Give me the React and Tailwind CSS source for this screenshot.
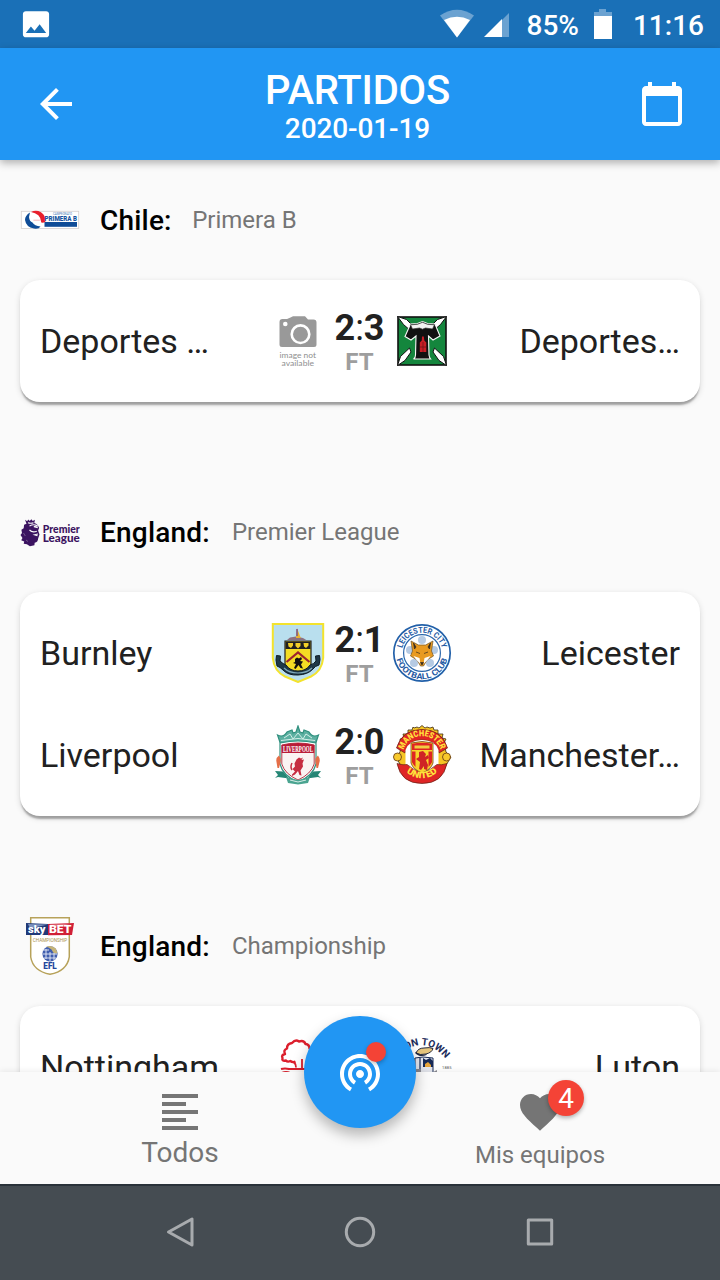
import React from 'react';
import {
  MdArrowBack,
  MdCalendarToday,
  MdFavorite,
  MdFormatAlignLeft,
  MdImage,
  MdWifiTethering,
} from 'react-icons/md';

function PrimeraB() {
  return (
    <svg className="h-[60px] w-[60px]" viewBox="0 0 60 60">
      <rect x="1.3" y="21.3" width="57.4" height="17.2" fill="#fff" stroke="#d4cfcf" strokeWidth=".8" />
      <path d="M10 22.500Q5 25.500 5 30 6 37 14 38.600 19 39.300 20.500 36.500 14.500 36 12.500 32.500 9.500 31.500 9 27z" fill="#0f4c97" />
      <path d="M11 22q5-2.500 10 .2 5.300 3.500 4.300 9.800-2 1-4 .500-.5-5-3-7.300-3-2.500-7.300-3.200z" fill="#e8202c" />
      <path d="M13.400 30.200h6.500" stroke="#f3a3a8" strokeWidth=".8" />
      <text x="33" y="25.200" fontFamily="Roboto, sans-serif" fontSize="3" fill="#4474b2" textLength="19" lengthAdjust="spacingAndGlyphs">CAMPEONATO</text>
      <text x="24.500" y="31" fontFamily="Roboto, sans-serif" fontWeight="900" fontSize="7.300" fill="#1754a0" textLength="32.500" lengthAdjust="spacingAndGlyphs">PRIMERA B</text>
      <rect x="24.500" y="32" width="32.500" height="4.800" fill="#0f4c97" />
    </svg>
  );
}

function PremierLeague() {
  return (
    <svg className="h-[60px] w-[60px]" viewBox="0 0 60 60">
      <path
        d="M5 17.800l2.200 1.400 1-1.700 1.500 1.600 1.700-1.900 1.300 1.900 2.200-1.300-.6 3.200q4 1.400 4.800 5l-1 2.400 1.400 4-1.300 3.800q-.3 4-3.500 4.600l-.3 2.500-4.500 1-3-2-3.200-.5.5-2.400-3-1.200 1.300-2.300L.500 33l1.500-2-.6-3.300 2.300-1.500.4-3.500 2.400-1z"
        fill="#3b1360"
      />
      <path d="M9.500 24q4.500-2.600 8 0l-3.600.6 3.900 1.100M9.500 28q2.800 3 7.300 1.200M18 32l-3.500.8 3 1M8 20.800q3 1 5.500 0" fill="none" stroke="#fafafa" strokeWidth="1.100" />
      <path d="M3.500 31l1.800 3M6 38l2 1.500" fill="none" stroke="#8a72a0" strokeWidth=".7" />
      <g fontFamily="Lato, sans-serif" fontWeight="900" fill="#3b1360">
        <text x="22.800" y="30.500" fontSize="10.500" textLength="37" lengthAdjust="spacingAndGlyphs">Premier</text>
        <text x="22.800" y="40" fontSize="10.500" textLength="37" lengthAdjust="spacingAndGlyphs">League</text>
      </g>
    </svg>
  );
}

function Championship() {
  return (
    <svg className="h-[60px] w-[60px]" viewBox="0 0 60 60">
      <path d="M10.700 1.800h38.600v39Q47 55 30 58.300Q13 55 10.700 41z" fill="#fff" stroke="#b7a25a" strokeWidth="1.500" />
      <path d="M6 7l22 1v11L6 19z" fill="#203a78" />
      <path d="M8 8l20 .5-18 4z" fill="#7b91bd" />
      <path d="M28 8l26-1-2 12-24 .2z" fill="#d01f36" />
      <path d="M30 8.500l22-.8-21 3.800z" fill="#e17480" />
      <g fontFamily="Roboto, sans-serif" fontWeight="900" fill="#fff">
        <text x="8" y="16.500" fontSize="11" textLength="17.500" lengthAdjust="spacingAndGlyphs">sky</text>
        <text x="29" y="17.300" fontSize="10.500" textLength="22.500" lengthAdjust="spacingAndGlyphs">BET</text>
      </g>
      <text x="12.800" y="25.500" fontFamily="Roboto, sans-serif" fontSize="5" fill="#a8914b" textLength="34.500" lengthAdjust="spacingAndGlyphs">CHAMPIONSHIP</text>
      <circle cx="30" cy="37.800" r="7.600" fill="#405eae" />
      <path d="M26 30.800q6-2.500 10 2l1.500 4.500q-4 1-5-2t-6.500-4.500z" fill="#c5b478" />
      <path d="M22 34h7M23 38h14M24 42h12M26 33v10M30 36v9M34 37v7" stroke="#e9edf8" strokeWidth=".9" />
      <text x="23.300" y="53" fontFamily="Roboto, sans-serif" fontWeight="900" fontSize="8.400" fill="#24479c" textLength="13.500" lengthAdjust="spacingAndGlyphs">EFL</text>
    </svg>
  );
}

function NoImage() {
  return (
    <svg className="h-[60px] w-[60px]" viewBox="0 0 60 60">
      <path d="M14.500 8h4.500l3.500-1.500L25 5.200h12l3 3.200h5.500q3 0 3 3v22q0 2.500-2.500 2.500H14q-2.500 0-2.500-2.500V11q0-3 3-3z" fill="#999" />
      <circle cx="32.500" cy="23.200" r="8.800" fill="#999" stroke="#fff" strokeWidth="2.600" />
      <circle cx="17.300" cy="13" r="2.300" fill="#fff" />
      <g fontFamily="Lato, sans-serif" fontWeight="400" fontSize="7.600" fill="#8f8f8f">
        <text x="11.500" y="46.800" textLength="36.500" lengthAdjust="spacingAndGlyphs">image not</text>
        <text x="13.500" y="55.200" textLength="32.500" lengthAdjust="spacingAndGlyphs">available</text>
      </g>
    </svg>
  );
}

function Temuco() {
  return (
    <svg className="h-[60px] w-[60px]" viewBox="0 0 60 60">
      <rect x="6" y="6" width="48" height="48" fill="#14863d" stroke="#111" strokeWidth="1.600" />
      <path d="M5.500 5.500l9 3 9 9-4 3-8-7zM54.500 5.500l-9 3-9 9 4 3 8-7zM5.500 54.500l3-9 9-8.500 1.500 4-6 8.500zM54.500 54.500l-3-9-9-8.500-1.500 4 6 8.500z" fill="#fff" stroke="#111" strokeWidth="1" />
      <path d="M18.500 13l7-.5 5-2 5 2 7.500.5 5 12-7 4-4.500-4 .5 19q.5 3 1.500 4H21.500q2-1 2-4l.5-19-5 4-6-3.500z" fill="#111" stroke="#f8f8f8" strokeWidth="1.100" />
      <path d="M18.500 13.800l7-.5 5-2 5 2 7 .5-2 4.200-7-1-3 1.200-3-1.200-7 1z" fill="#f2f2f2" stroke="#333" strokeWidth=".7" />
      <path d="M30 25.500h1.800l.5 4 2 2v9.500h-6.500v-9.500l2-2z" fill="#c71d25" />
      <path d="M31 31v10M28 36h6" stroke="#661417" strokeWidth=".7" />
    </svg>
  );
}

function Burnley() {
  return (
    <svg className="h-[60px] w-[60px]" viewBox="0 0 60 60">
      <path d="M4.800 1h50.400v34Q54 48 43 53.500L30 59 17 53.500Q6 48 4.800 35z" fill="#b9dfee" stroke="#f3e32d" strokeWidth="2" />
      <path d="M17 18h26v24q-1 5-13 9-12-4-13-9z" fill="#f4dd24" stroke="#222" strokeWidth="1.200" />
      <path d="M17.500 18.500h25V26h-25z" fill="#202020" />
      <path d="M20 20h5v2.500l-2 2.500-2.500-1.500zM27.500 20h5v3L30 25.500 27.500 23zM35.500 20h5v2.500L38 25l-2-1.500z" fill="#f1cf28" />
      <path d="M18.500 39L30 29.500 41.500 39" fill="none" stroke="#9c252f" strokeWidth="2.200" />
      <path d="M27 36l2-1.500 2 1 2-1.500 1 2-2 2 3 .5-2 3 2 4-2.500-.5-2-3-3 4-1.500-1 2-4-3-1 2-1z" fill="#111" />
      <path d="M19 17l3-2.500 6-1 7 1.500 4 2.500z" fill="#8c7181" />
      <path d="M28 15l1-10 3 8 1 2z" fill="#e9b131" />
      <path d="M29 6v7" stroke="#77528b" strokeWidth="1.500" />
      <path d="M8.500 32.500l4 .5-.5 5q3 3 6 4 4 6 12 6t12-6q4-1 6-4l-.5-5 4-.5.5 4-1 5.500q-4 1-6 4-5 5.500-15 6T15 47q-3-3-6-4L8 37z" fill="#1e3848" stroke="#0d1b24" strokeWidth="1" />
      <path d="M16 45q5 5 14 5t14-5" fill="none" stroke="#7fa8ba" strokeWidth="1.200" />
    </svg>
  );
}

function Leicester() {
  return (
    <svg className="h-[60px] w-[60px]" viewBox="0 0 60 60">
      <defs>
        <path id="lei-top" d="M9.700 30a20.300 20.300 0 0 1 40.600 0" />
        <path id="lei-bottom" d="M3.800 30a26.200 26.200 0 0 0 52.400 0" />
      </defs>
      <circle cx="30" cy="30" r="28.200" fill="#fff" stroke="#2260a9" strokeWidth="1.700" />
      <circle cx="30" cy="30" r="18.400" fill="#fff" stroke="#2a66ab" strokeWidth="1.200" />
      <g fill="#2d6ab0" opacity=".35">
        <circle cx="30" cy="17" r="4" /><circle cx="18" cy="27" r="4" /><circle cx="42" cy="27" r="4" /><circle cx="22" cy="40" r="4" /><circle cx="38" cy="40" r="4" />
      </g>
      <path d="M19 18l7.500 4h7l7.500-4-1.500 10 2 5-6.500 4-3.500 6h-3l-3.500-6-6.500-4 2-5z" fill="#e89a20" stroke="#6f542a" strokeWidth=".7" />
      <path d="M21.500 33l6 2 1 6-4-4zM38.500 33l-6 2-1 6 4-4z" fill="#fff" />
      <path d="M21.500 20l2.500 4-1.500 2zM38.500 20L36 24l1.500 2zM24 29l4 1.500M36 29l-4 1.500M28.500 39.500h3L30 42z" fill="#35291c" stroke="#35291c" strokeWidth=".7" />
      <g fontFamily="Roboto, sans-serif" fontWeight="700" fill="#1f5aa3">
        <text fontSize="8.200"><textPath href="#lei-top" startOffset="50%" textAnchor="middle" textLength="54" lengthAdjust="spacingAndGlyphs">LEICESTER CITY</textPath></text>
        <text fontSize="8.200"><textPath href="#lei-bottom" startOffset="50%" textAnchor="middle" textLength="69" lengthAdjust="spacingAndGlyphs">FOOTBALL CLUB</textPath></text>
      </g>
    </svg>
  );
}

function Liverpool() {
  return (
    <svg className="h-[60px] w-[60px]" viewBox="0 0 60 60">
      <path d="M9.500 10q6 3 9.500-3l5-2 1 3 3-1 2-6 2 6 3 1 1-3 5 2q3.500 6 9.500 3l-2.500 7.500h-36z" fill="#5cb0a1" stroke="#2f8f7e" strokeWidth="1.200" />
      <path d="M16 13l6-4 3 5 5-6 5 6 3-5 6 4M13 15.500l17-2 17 2" stroke="#d2eee8" fill="none" strokeWidth="1" />
      <path d="M12 18q18-4 36 0v21q-3 12-18 18-15-6-18-18z" fill="#fff" stroke="#31917f" strokeWidth="1.200" />
      <path d="M13.800 20q16.200-4 32.400 0v19q-3 10-16.200 16-13.200-6-16.200-16z" fill="#faf3f2" stroke="#b43a48" strokeWidth="1" />
      <path d="M13.800 20q16.200-4 32.400 0v8H13.800z" fill="#b91c38" />
      <text x="15" y="26.600" fontFamily="Liberation Serif, serif" fontWeight="700" fontSize="7.500" fill="#fff" textLength="30" lengthAdjust="spacingAndGlyphs">LIVERPOOL</text>
      <path d="M28.500 34.500l2.500-2 2 1 2-1-1.500 2.500 2.500-.5-1.500 4 .5 3-2.500 4 1 5-2-.5-1.500-4-3 3.500-3 1.500v-1.500l3-3-2.500-2.500 2.500-2.500-.5-3z" fill="#c62c40" />
      <path d="M24 38q-2 4 0 7" fill="none" stroke="#c62c40" strokeWidth="1.500" />
      <path d="M8.500 37q-1-4 2.500-6.500 2.500 3.500 1.500 6.500L11 43H9.500zM47.500 37q-1-4 2.500-6.500 2.500 3.500 1.500 6.500L50 43h-1.500z" fill="#e56e48" />
      <path d="M7 46l8 .5 6 7-11-1.500-3 1 3-3zM53 46l-8 .5-6 7 11-1.500 3 1-3-3z" fill="#258675" />
      <path d="M18 52l12 3 12-3-2 6-10 1.500L20 58z" fill="#4aa490" />
      <path d="M22 55l8 2 8-2" fill="none" stroke="#d8eee8" strokeWidth="1" />
    </svg>
  );
}

function ManUnited() {
  return (
    <svg className="h-[60px] w-[60px]" viewBox="0 0 60 60">
      <defs>
        <path id="mu-top" d="M11 27A19.300 19.300 0 0 1 49 27" />
        <path id="mu-bottom" d="M11 44.500Q30 62 49 44.500" />
      </defs>
      <path d="M22 3l3-1 2 1 3-2.500L33 3l2-1 3 1 3-1 1 3h4v4h5l-1 4 4 1-2 4 2 9 5 5-6 10-9 8-7 4-3-1-3 2-3-2-3 1-8-4-8-9-5-9 4-5 1-9-1-4 4-1-1-4h5V5h4l1-3z" fill="#f5c525" stroke="#3f2b13" strokeWidth=".8" />
      <path d="M4.500 23Q10 4.500 30 4.500T55.500 23l-8.500 5Q44 14.800 30 14.800T13 28z" fill="#df2525" stroke="#612014" strokeWidth=".7" />
      <path d="M13.500 25Q17 15 30 15t16.500 10v16Q38 51 30 51T13.500 41z" fill="#fff" />
      <path d="M5 38.500q7 2 10 1 15 14 30 0 4 1 10-1-4 20-25 20t-25-20z" fill="#df2525" stroke="#612014" strokeWidth=".7" />
      <path d="M19 18q11-3 22 0v20q-2 6.500-11 10-9-3.500-11-10z" fill="#f8d32d" stroke="#7b3a1a" strokeWidth=".8" />
      <path d="M20 18.800q10-2.300 20 0V25H20zM20 26.500h3.500V42q-3-3-3.500-5zM40 26.500h-3.500V42q3-3 3.500-5z" fill="#df2422" />
      <path d="M22.500 20.500h15v3h-15z" fill="#f1cc43" />
      <path d="M27 27l4-1 3 3-1 3 3-2 1 3-3 2 2 5-1 5-3-1v-3l-3 4-2-1 1-7-4-3 3-2z" fill="#cf2425" />
      <circle cx="5.500" cy="32" r="4" fill="#f7c92c" stroke="#704318" strokeWidth=".9" />
      <circle cx="54.500" cy="32" r="4" fill="#f7c92c" stroke="#704318" strokeWidth=".9" />
      <g fontFamily="Roboto, sans-serif" fontWeight="900" fill="#ffe33c">
        <text fontSize="8.600"><textPath href="#mu-top" startOffset="50%" textAnchor="middle" textLength="49" lengthAdjust="spacingAndGlyphs">MANCHESTER</textPath></text>
        <text fontSize="9"><textPath href="#mu-bottom" startOffset="50%" textAnchor="middle" textLength="34" lengthAdjust="spacingAndGlyphs">UNITED</textPath></text>
      </g>
    </svg>
  );
}

function Nottingham() {
  return (
    <svg className="h-[60px] w-[60px]" viewBox="0 0 60 60">
      <path
        d="M27.500 24.500q-3 1.500-5-.5-3 1.500-4.500-.5-4.500 1-3.500-2.500-1.500-3 2.500-4-2-4 2-5.500 0-5 5-5.500 3.500-4 7-1.500 5-1.500 6.500 2.500 4 .5 4 4.500 4 2.500 3 6 3 4-1 6"
        fill="#fff" stroke="#dc1f2d" strokeWidth="2.400" strokeLinejoin="round"
      />
      <path d="M22.500 24.500q5.500 0 5.500 6M34 22v9" fill="none" stroke="#dc1f2d" strokeWidth="1.800" />
      <path d="M13 32q4-1 8 0h24M14 36q4-2 8 0h24" fill="none" stroke="#dc1f2d" strokeWidth="2.200" />
    </svg>
  );
}

function Luton() {
  return (
    <svg className="h-[60px] w-[60px]" viewBox="0 0 60 60">
      <defs><path id="luton-arc" d="M1 24Q29-6 53 21" /></defs>
      <text fontFamily="Roboto, sans-serif" fontWeight="700" fontSize="10" fill="#1c2c5b">
        <textPath href="#luton-arc" startOffset="50%" textAnchor="middle" textLength="63" lengthAdjust="spacingAndGlyphs">LUTON TOWN</textPath>
      </text>
      <path d="M24 16q2-5 8-5 6-1 9 .5-1 4-7 5.500-6 1.500-10-1z" fill="#e6c57c" stroke="#252a3f" strokeWidth="1" />
      <path d="M23.500 15.500q4 4.500 11 2" stroke="#1d2742" strokeWidth="1.300" fill="none" />
      <path d="M18 21h10v16H18z" fill="#c88b39" />
      <path d="M23 21l8-1 10 1v18H23z" fill="#e6e8ef" stroke="#172a57" strokeWidth="1" />
      <path d="M28 21v14" stroke="#172a57" strokeWidth="1.200" />
      <path d="M31 21l3 2 4-2 3 3v6H31z" fill="#172a57" />
      <path d="M33 27l3-2 3 3v2h-6z" fill="#e8a63b" />
      <path d="M22 32h7v3h12l4-2v3H22z" fill="#8b8c94" />
      <text x="50" y="31.500" fontFamily="Roboto, sans-serif" fontSize="4" fill="#555" textLength="9.500">1885</text>
    </svg>
  );
}

const LEAGUES = [
  {
    country: 'Chile', name: 'Primera B', Logo: PrimeraB, gap: 'gap-[20.5px]',
    matches: [{ home: 'Deportes …', away: 'Deportes…', score: [2, 3], Home: NoImage, Away: Temuco }],
  },
  {
    country: 'England', name: 'Premier League', Logo: PremierLeague, gap: 'gap-[22px]',
    matches: [
      { home: 'Burnley', away: 'Leicester', score: [2, 1], Home: Burnley, Away: Leicester },
      { home: 'Liverpool', away: 'Manchester…', score: [2, 0], Home: Liverpool, Away: ManUnited },
    ],
  },
  {
    country: 'England', name: 'Championship', Logo: Championship, gap: 'gap-[22px]',
    matches: [{ home: 'Nottingham', away: 'Luton', score: null, Home: Nottingham, Away: Luton }],
  },
];

function MatchRow({ match }) {
  const { home, away, score, Home, Away } = match;
  return (
    <div className="flex h-[102px] items-center px-5">
      <span className="flex-1 whitespace-nowrap text-[34px] leading-10 text-[#212121]">{home}</span>
      <Home />
      <div className="flex w-16 flex-col items-center pt-2 pr-px">
        {score && (
          <>
            <div className="flex text-[36px] leading-[34px] font-bold text-[#212121]">
              <span>{score[0]}</span>
              <span className="font-normal">:</span>
              <span>{score[1]}</span>
            </div>
            <span className="text-[24px] leading-[34px] font-bold text-[#9e9e9e]">FT</span>
          </>
        )}
      </div>
      <Away />
      <span className="flex-1 whitespace-nowrap text-right text-[34px] leading-10 text-[#212121]">{away}</span>
    </div>
  );
}

function League({ league }) {
  const { country, name, Logo, gap, matches } = league;
  return (
    <section className="flex flex-col gap-[30px]">
      <header className="flex h-[60px] items-center gap-5">
        <Logo />
        <h2 className={`flex items-center ${gap}`}>
          <span className="pt-[2px] text-[28px] leading-8 font-medium tracking-[0.2px] text-black">{country}:</span>
          <span className="text-[24px] leading-8 text-[#757575]">{name}</span>
        </h2>
      </header>
      <div className="rounded-[20px] bg-white py-[10px] shadow-[0_4px_2px_-1px_rgba(0,0,0,0.3),0_2px_6px_rgba(0,0,0,0.14)]">
        {matches.map((m) => <MatchRow key={m.home} match={m} />)}
      </div>
    </section>
  );
}

function StatusBar() {
  return (
    <div className="flex h-12 shrink-0 items-center justify-between bg-[#1a70b7] pr-4 pl-5 text-white">
      <MdImage className="mt-px h-8 w-8" viewBox="1 1.500 22 22" />
      <div className="flex items-center text-[28px] leading-8 font-medium">
        <svg className="h-[30px] w-[34px]" viewBox="0 0 34 30">
          <path d="M0 6.500Q17-5 34 6.500L17 28.500z" fill="#6ba2d1" />
          <path d="M4 11Q17 4.500 30 11L17 28.500z" fill="#fff" />
        </svg>
        <svg className="mt-px ml-[10px] h-6 w-[25px]" viewBox="0 0 25 24">
          <path d="M25 0v24H1z" fill="#6ba2d1" />
          <path d="M18 6v18H0z" fill="#fff" />
        </svg>
        <span className="ml-[18px] pt-[3px]">85%</span>
        <svg className="ml-[15px] h-[30px] w-[18px]" viewBox="0 0 18 30">
          <path d="M5 0h7v3h6v5H0V3h5z" fill="#6ba2d1" />
          <path d="M0 7h18v23H0z" fill="#fff" />
        </svg>
        <span className="ml-[21px] pt-[3px]">11:16</span>
      </div>
    </div>
  );
}

function AppBar() {
  return (
    <div className="z-10 flex h-28 shrink-0 items-center justify-between bg-[#2196f3] pr-[34px] pl-8 text-white shadow-[0_3px_8px_rgba(0,0,0,0.3)]">
      <MdArrowBack className="h-12 w-12" />
      <h1 className="flex flex-col items-center pt-[9px] pr-[3px] font-medium">
        <span className="text-[40px] leading-10 tracking-[-0.2px]">PARTIDOS</span>
        <span className="text-[28px] leading-9 tracking-[-0.1px]">2020-01-19</span>
      </h1>
      <MdCalendarToday className="h-12 w-12" />
    </div>
  );
}

function BottomBar() {
  return (
    <div className="relative z-10 flex h-28 shrink-0 bg-[#fafafa] text-[#757575] shadow-[0_-1px_6px_rgba(0,0,0,0.08)]">
      <div className="flex flex-1 flex-col items-center pt-4">
        <MdFormatAlignLeft className="h-12 w-12" />
        <span className="pt-px text-[28px] leading-8">Todos</span>
      </div>
      <div className="flex flex-1 flex-col items-center pt-4">
        <div className="relative">
          <MdFavorite className="h-12 w-12" />
          <span className="absolute -top-2 left-8 flex h-9 w-9 items-center justify-center rounded-full bg-[#f44336] pt-[2px] text-[28px] leading-9 text-white shadow-[0_2px_4px_rgba(0,0,0,0.3)]">4</span>
        </div>
        <span className="pt-[3px] text-[24px] leading-8">Mis equipos</span>
      </div>
      <button className="absolute -top-14 left-[304px] flex h-28 w-28 items-center justify-center rounded-full bg-[#2196f3] text-white shadow-[0_7px_14px_rgba(0,0,0,0.28)]">
        <MdWifiTethering className="h-12 w-12" />
        <span className="absolute top-[26px] left-[62px] h-5 w-5 rounded-full bg-[#f44336] shadow-[0_2px_4px_rgba(0,0,0,0.25)]" />
      </button>
    </div>
  );
}

function SystemBar() {
  return (
    <div className="flex h-24 shrink-0 items-center border-t-2 border-[#2b333b] bg-[#454c52] px-[90px] pb-[2px]">
      {[
        <path key="back" d="M8.500 20L32 7v26z" />,
        <circle key="home" cx="20" cy="20" r="13.700" />,
        <rect key="recent" x="8.300" y="8" width="23.400" height="24" />,
      ].map((shape) => (
        <div key={shape.key} className="flex flex-1 justify-center">
          <svg className="h-10 w-10" viewBox="0 0 40 40" fill="none" stroke="#a8abae" strokeWidth="3" strokeLinejoin="round">{shape}</svg>
        </div>
      ))}
    </div>
  );
}

export default function App() {
  return (
    <div className="flex h-[1280px] w-[720px] flex-col overflow-hidden bg-[#fafafa] font-[Roboto,sans-serif]">
      <StatusBar />
      <AppBar />
      <main className="flex min-h-0 flex-1 flex-col gap-[100px] overflow-hidden px-5 pt-[30px]">
        {LEAGUES.map((l) => <League key={l.name} league={l} />)}
      </main>
      <BottomBar />
      <SystemBar />
    </div>
  );
}
